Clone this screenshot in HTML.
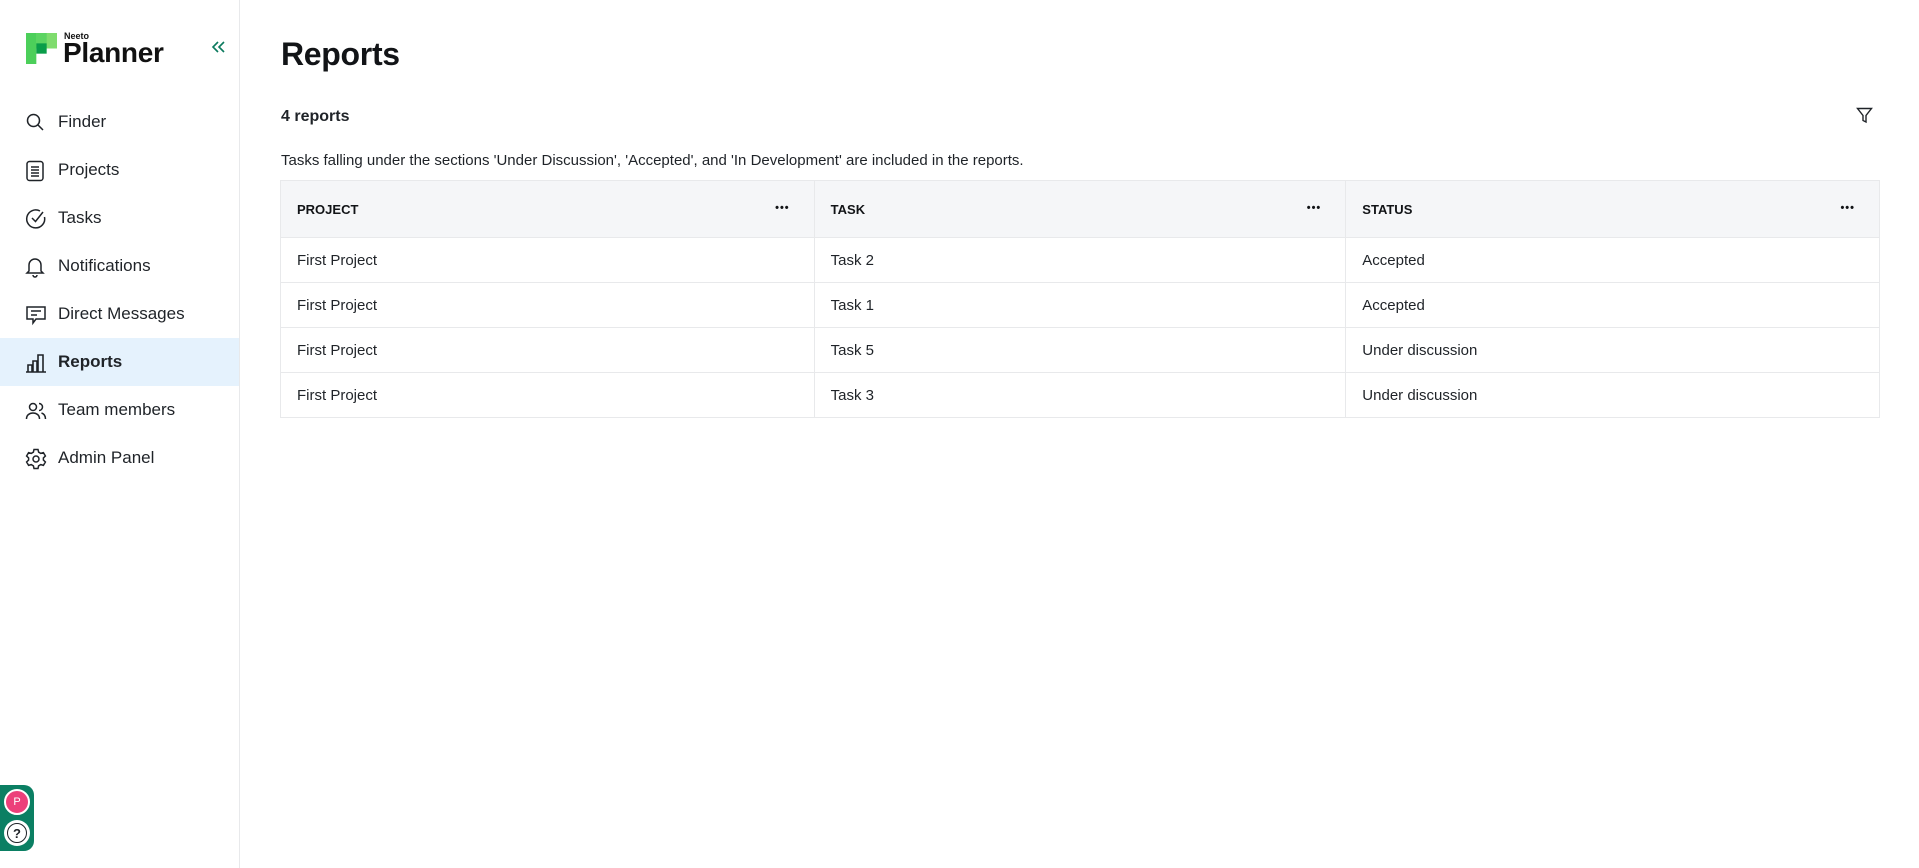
<!DOCTYPE html>
<html><head><meta charset="utf-8"><style>
*{box-sizing:border-box;margin:0;padding:0}
body{width:1919px;height:868px;overflow:hidden;background:#fff;font-family:"Liberation Sans",Arial,sans-serif;color:#1f2328;position:relative}
.side{position:absolute;left:0;top:0;width:240px;height:868px;border-right:1px solid #e8e9eb}
.nav{position:absolute;left:0;width:239px;height:48px;display:flex;align-items:center;font-size:17px;color:#1f2328}
.nav svg{position:absolute;left:25px;top:14px}
.nav span{position:absolute;left:58px}
.nav.act{background:#e5f2fd;font-weight:bold}
h1{position:absolute;left:281px;top:36px;font-size:32px;font-weight:bold;color:#121417;letter-spacing:-0.3px}
.cnt{position:absolute;left:281px;top:108px;font-size:16px;font-weight:bold}
.desc{position:absolute;left:281px;top:152px;font-size:15px;color:#1f2328}
table{position:absolute;left:280px;top:180px;width:1600px;border-collapse:collapse;font-size:15px}
td,th{border:1px solid #e8e9eb;padding:0 16px;text-align:left;position:relative}
th{height:57px;background:#f5f6f8;font-size:13px;font-weight:bold;color:#121417}
td{height:45px}
.dots{position:absolute;right:24px;top:21px;font-size:11px;letter-spacing:1px}
</style></head><body>
<div class="side">
 <svg style="position:absolute;left:26px;top:33px" width="31" height="31" viewBox="0 0 30 30">
  <rect x="0" y="0" width="30" height="15" fill="#7fdc6e"/>
  <rect x="0" y="0" width="10" height="30" fill="#4ccf5a"/>
  <rect x="10" y="0" width="10" height="10" fill="#5cd462"/>
  <rect x="10" y="10" width="10" height="10" fill="#0a9d49"/>
 </svg>
 <div style="position:absolute;left:64px;top:31px;font-size:9px;font-weight:bold;color:#111">Neeto</div>
 <div style="position:absolute;left:63px;top:37px;font-size:28px;font-weight:bold;color:#111;letter-spacing:-0.3px">Planner</div>
 <svg style="position:absolute;left:210px;top:39px" width="16" height="16" viewBox="0 0 16 16" fill="none" stroke="#0b7a5e" stroke-width="1.6"><path d="M8 3 3 8l5 5M14 3 9 8l5 5"/></svg>

 <div class="nav" style="top:98px"><svg width="20" height="20" viewBox="0 0 20 20" fill="none" stroke="#1f2328" stroke-width="1.5"><circle cx="8.5" cy="8.5" r="6"/><path d="M13 13l5 5"/></svg><span>Finder</span></div>
 <div class="nav" style="top:146px"><svg width="20" height="22" viewBox="0 0 20 22" fill="none" stroke="#1f2328" stroke-width="1.5"><rect x="2" y="1.5" width="16" height="19" rx="2.5"/><path d="M6 7h8M6 10h8M6 13h8M6 16h8"/></svg><span>Projects</span></div>
 <div class="nav" style="top:194px"><svg width="22" height="22" viewBox="0 0 22 22" fill="none" stroke="#1f2328" stroke-width="1.5"><path d="M19.5 9A9 9 0 1 1 15 3"/><path d="M7 10l3.5 3.5L18 4"/></svg><span>Tasks</span></div>
 <div class="nav" style="top:242px"><svg width="20" height="22" viewBox="0 0 20 22" fill="none" stroke="#1f2328" stroke-width="1.5"><path d="M4 15V9a6 6 0 0 1 12 0v6l2 2H2z"/><path d="M8 19a2 2 0 0 0 4 0"/></svg><span>Notifications</span></div>
 <div class="nav" style="top:290px"><svg width="22" height="22" viewBox="0 0 22 22" fill="none" stroke="#1f2328" stroke-width="1.5"><path d="M2 3h18v12h-9l-3 4v-4H2z"/><path d="M6 7h10M6 11h6"/></svg><span>Direct Messages</span></div>
 <div class="nav act" style="top:338px"><svg width="22" height="22" viewBox="0 0 22 22" fill="none" stroke="#1f2328" stroke-width="1.6"><path d="M1 20h20M3 20v-7h4v7M8 20V9h4v11M13 20V3h5v17"/></svg><span>Reports</span></div>
 <div class="nav" style="top:386px"><svg width="22" height="22" viewBox="0 0 22 22" fill="none" stroke="#1f2328" stroke-width="1.5"><circle cx="8" cy="7" r="3.5"/><path d="M1.5 19c0-4 3-6 6.5-6s6.5 2 6.5 6"/><path d="M14 3.5a3.5 3.5 0 0 1 0 7M16.5 13c2.5.8 4 2.8 4 6"/></svg><span>Team members</span></div>
 <div class="nav" style="top:434px"><svg width="22" height="22" viewBox="0 0 22 22" fill="none" stroke="#1f2328" stroke-width="1.5"><path d="M9 1.5h4l.6 2.6 2.2 1.3 2.6-.8 2 3.4-2 1.9v2.2l2 1.9-2 3.4-2.6-.8-2.2 1.3-.6 2.6H9l-.6-2.6-2.2-1.3-2.6.8-2-3.4 2-1.9V9.9l-2-1.9 2-3.4 2.6.8 2.2-1.3z"/><circle cx="11" cy="11" r="3"/></svg><span>Admin Panel</span></div>

 <div style="position:absolute;left:0;top:785px;width:34px;height:66px;background:#0b7f63;border-radius:0 10px 10px 0"></div>
 <div style="position:absolute;left:4px;top:789px;width:26px;height:26px;border-radius:50%;background:#ec407a;border:2px solid #fff;color:#fff;font-size:11px;display:flex;align-items:center;justify-content:center">P</div>
 <div style="position:absolute;left:4px;top:820px;width:26px;height:26px;border-radius:50%;background:#fff;display:flex;align-items:center;justify-content:center"><div style="width:20px;height:20px;border:1.5px solid #1f2328;border-radius:50%;font-size:13px;font-weight:bold;display:flex;align-items:center;justify-content:center;color:#1f2328">?</div></div>
</div>

<h1>Reports</h1>
<div class="cnt">4 reports</div>
<svg style="position:absolute;left:1856px;top:107px" width="17" height="17" viewBox="0 0 17 17" fill="none" stroke="#1f2328" stroke-width="1.4"><path d="M1.5 1.5h14L10 8.5V15l-3-1.5V8.5z"/></svg>
<div class="desc">Tasks falling under the sections 'Under Discussion', 'Accepted', and 'In Development' are included in the reports.</div>
<table>
<colgroup><col style="width:534px"><col style="width:532px"><col style="width:534px"></colgroup>
<tr><th>PROJECT<span class="dots">•••</span></th><th>TASK<span class="dots">•••</span></th><th>STATUS<span class="dots">•••</span></th></tr>
<tr><td>First Project</td><td>Task 2</td><td>Accepted</td></tr>
<tr><td>First Project</td><td>Task 1</td><td>Accepted</td></tr>
<tr><td>First Project</td><td>Task 5</td><td>Under discussion</td></tr>
<tr><td>First Project</td><td>Task 3</td><td>Under discussion</td></tr>
</table>
</body></html>
